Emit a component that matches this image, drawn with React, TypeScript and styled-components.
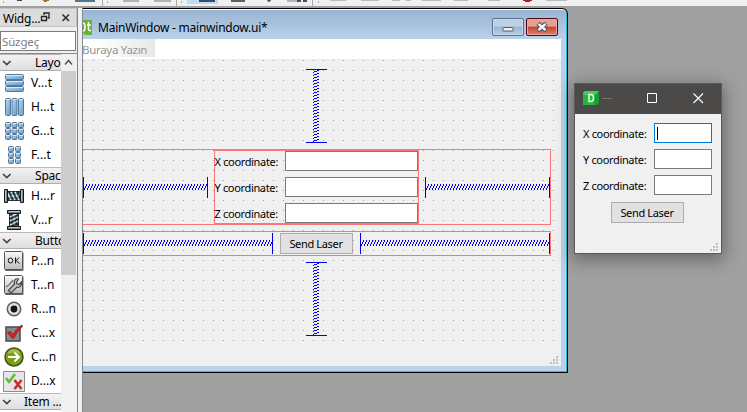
import React from "react";
import styled, { createGlobalStyle } from "styled-components";

const GlobalStyle = createGlobalStyle`
  * { box-sizing: border-box; }
  body { margin: 0; overflow: hidden; }
`;

const Screen = styled.div`
  width: 747px;
  height: 412px;
  overflow: hidden;
  display: flex;
  flex-direction: column;
  background: #f0f0f0;
  font-family: "Noto Sans", "Open Sans", sans-serif;
  font-size: 11.5px;
  color: #000;
`;

const Toolbar = styled.div`
  height: 8px;
  flex: none;
  background: #f0f0f0;
  border-bottom: 2px solid #a0a0a4;
  svg { display: block; }
`;

const Body = styled.div`
  flex: 1;
  min-height: 0;
  display: flex;
`;

const Dock = styled.div`
  width: 78px;
  flex: none;
  display: flex;
  flex-direction: column;
  border-right: 1px solid #82858c;
  background: #f0f0f0;
  overflow: hidden;
`;

const Splitter = styled.div`
  width: 5px;
  flex: none;
  background: #f0f0f0;
  border-right: 1px solid #828790;
`;

const DockTitle = styled.div`
  height: 19px;
  flex: none;
  background: #dcdcdc;
  border: 1px solid #c4c4c4;
  border-left: 0;
  display: flex;
  align-items: center;
  padding: 2px 0 0 3px;
  font-size: 12px;
  line-height: 17px;
  svg { flex: none; }
`;

const DockCaption = styled.span`
  width: 37px;
  letter-spacing: -0.2px;
  white-space: nowrap;
`;

const FilterBox = styled.div`
  margin: 4px 1px 2px 0;
  height: 20px;
  flex: none;
  border: 1px solid #7a7a7a;
  background: #fff;
  color: #808080;
  padding-left: 1px;
  line-height: 20px;
  letter-spacing: -0.15px;
`;

const Tree = styled.div`
  flex: 1;
  min-height: 0;
  display: flex;
  border-top: 1px solid #828790;
  background: #fff;
`;

const TreeList = styled.div`
  width: 61px;
  overflow: hidden;
`;

const ScrollTrack = styled.div`
  width: 16px;
  background: #f0f0f0;
  svg { display: block; }
`;

const ScrollThumb = styled.div`
  height: 204px;
  width: 15px;
  background: #cdcdcd;
`;

const Category = styled.div<{ $indent: number }>`
  height: 17px;
  display: flex;
  align-items: center;
  white-space: nowrap;
  background: linear-gradient(#f2f2f2, #dedede);
  border-top: 1px solid #b8b8b8;
  border-bottom: 1px solid #b0b0b0;
  padding-left: 2px;
  line-height: 15px;
  font-size: 12px;
  letter-spacing: -0.2px;
  svg { flex: none; margin-right: ${(p) => p.$indent}px; }
`;

const WidgetRow = styled.div`
  height: 24px;
  display: flex;
  align-items: center;
  padding-left: 3px;
  gap: 6px;
  line-height: 16px;
  white-space: nowrap;
  font-size: 12px;
  letter-spacing: 0.1px;
  svg { flex: none; }
`;

const Workspace = styled.div`
  flex: 1;
  position: relative;
  overflow: hidden;
  background: #a0a0a0;
`;

const FormWindow = styled.div`
  position: absolute;
  left: 0;
  top: 0;
  width: 485px;
  height: 365px;
  display: flex;
  flex-direction: column;
  padding: 1px 6px 6px 0;
  background: linear-gradient(#98b3d2, #b9d1ea 30px);
  border: solid #000;
  border-width: 1px 1px 1px 0;
  border-top-right-radius: 6px;
  box-shadow: inset -1px -1px 0 #27bfdc, inset 0 1px 0 #fff;
`;

const FormTitle = styled.div`
  height: 29px;
  flex: none;
  display: flex;
  align-items: center;
  > svg { flex: none; }
`;

const FormCaption = styled.span`
  flex: 1;
  font-size: 12px;
  padding: 7px 0 0 6px;
  line-height: 16px;
  letter-spacing: -0.24px;
`;

const CaptionButton = styled.div<{ $close?: boolean }>`
  width: 32px;
  height: 18px;
  margin: 4px 3px 0 ${(p) => (p.$close ? -1 : 0)}px;
  display: flex;
  align-items: center;
  justify-content: center;
  border: 1px solid ${(p) => (p.$close ? "#4d0c14" : "#5b7192")};
  border-radius: 2px;
  box-shadow: inset 0 0 0 1px ${(p) => (p.$close ? "#eaa79e" : "#c8daec")};
  background: ${(p) =>
    p.$close
      ? "linear-gradient(#e6a093 0 45%, #c2452f 50%, #d98470)"
      : "linear-gradient(#bcd0e6 0 45%, #9bb4d0 50%, #b5cce4)"};
`;

const MenuBar = styled.div`
  height: 20px;
  flex: none;
  display: flex;
  background: #fff;
`;

const MenuHint = styled.div`
  width: 72px;
  height: 18px;
  background: linear-gradient(90deg, #fff 20%, #e8e8e8);
  color: #969696;
  line-height: 21px;
  white-space: nowrap;
  text-indent: -1px;
  letter-spacing: -0.3px;
`;

const FormCanvas = styled.div`
  flex: 1;
  display: flex;
  flex-direction: column;
  background: #f0f0f0;
`;

const DotGrid = styled.div`
  flex: 1;
  display: flex;
  flex-direction: column;
  padding-top: 10px;
  background: conic-gradient(from 0deg at 1px 1px, transparent 75%, #9c9c9c 0) 0 1px / 10px 10px;
`;

const VerticalSlot = styled.div`
  height: 74px;
  padding-left: 223px;
  svg { display: block; }
`;

const FieldsLayout = styled.div`
  width: 468px;
  height: 76px;
  margin: 6px 0;
  display: flex;
  align-items: center;
  justify-content: space-between;
  border: 1px solid #f87878;
  border-left: 0;
  > svg { flex: none; }
`;

const FormLayout = styled.div`
  width: 205px;
  height: 74px;
  margin-left: -1px;
  border: 1px solid #f87878;
  display: flex;
  flex-direction: column;
  gap: 6px;
`;

const ButtonLayout = styled.div`
  width: 468px;
  height: 25px;
  margin-bottom: 6px;
  display: flex;
  align-items: center;
  justify-content: space-between;
  border: 1px solid #f87878;
  border-left: 0;
  > svg { flex: none; }
`;

const FieldRow = styled.div`
  height: 20px;
  flex: none;
  display: flex;
  align-items: center;
`;

const FieldLabel = styled.span<{ $width: number }>`
  width: ${(p) => p.$width}px;
  flex: none;
  font-size: 11px;
  line-height: 18px;
  padding-top: 2px;
  letter-spacing: -0.34px;
  white-space: nowrap;
`;

const LineEdit = styled.div<{ $focused?: boolean }>`
  flex: 1;
  height: 20px;
  padding: 3px 2px;
  background: #fff;
  border: 1px solid ${(p) => (p.$focused ? "#0078d7" : "#7a7a7a")};
`;

const Caret = styled.div`
  width: 1px;
  height: 13px;
  background: #000;
`;

const PushButton = styled.div`
  width: 73px;
  height: 21px;
  flex: none;
  border: 1px solid #adadad;
  background: #e1e1e1;
  padding-right: 1px;
  text-align: center;
  font-size: 11px;
  line-height: 20px;
  letter-spacing: -0.34px;
`;

const GripRow = styled.div<{ $fill?: boolean }>`
  height: ${(p) => (p.$fill ? "auto" : "24px")};
  flex: ${(p) => (p.$fill ? 1 : "none")};
  display: flex;
  justify-content: flex-end;
  align-items: flex-end;
  padding: 0 3px 2px 0;
`;

const AppWindow = styled.div`
  position: absolute;
  left: 491px;
  top: 75px;
  width: 148px;
  height: 171px;
  display: flex;
  flex-direction: column;
  border: 1px solid #5a5a5a;
  background: #f0f0f0;
  box-shadow: 0 4px 16px 2px rgba(0, 0, 0, 0.36);
`;

const AppTitle = styled.div`
  height: 30px;
  flex: none;
  background: #4c4a48;
  svg { display: block; }
`;

const AppContent = styled.div`
  flex: 1;
  display: flex;
  flex-direction: column;
  gap: 6px;
  padding: 9px 0 0 8px;
`;

const AppRows = styled.div`
  width: 129px;
  display: flex;
  flex-direction: column;
  gap: 6px;
`;

const AppAction = styled.div`
  padding-left: 28px;
  margin-top: 1px;
`;

const BLUE = "#0000e6";

const HSpring = ({ id, width }: { id: string; width: number }) => (
  <svg width={width} height="21" shapeRendering="crispEdges">
    <defs>
      <pattern id={id} x="0" y="7" width="3" height="6" patternUnits="userSpaceOnUse">
        <path d="M1 4h1v2h-1zM2 2h1v2h-1zM0 0h1v2h-1z" fill={BLUE} />
      </pattern>
    </defs>
    <rect x="1" y="7" width={width - 2} height="6" fill={`url(#${id})`} />
    <path d={`M0 0h1v21h-1zM${width - 1} 0h1v21h-1z`} fill={BLUE} />
  </svg>
);

const VSpring = ({ id }: { id: string }) => (
  <svg width="21" height="74" shapeRendering="crispEdges">
    <defs>
      <pattern id={id} x="7" y="0" width="6" height="3" patternUnits="userSpaceOnUse">
        <path d="M4 1h2v1h-2zM1 2h3v1h-3zM0 0h1v1h-1z" fill={BLUE} />
      </pattern>
    </defs>
    <rect x="7" y="1" width="6" height="72" fill={`url(#${id})`} />
    <path d="M0 0h21v1h-21zM0 73h21v1h-21z" fill={BLUE} />
  </svg>
);

const Chevron = () => (
  <svg width="10" height="10" viewBox="0 0 10 10">
    <path d="M1 3l3.8 3.6L8.6 3" fill="none" stroke="#444" strokeWidth="1.7" />
  </svg>
);

const Grip = () => (
  <svg width="8" height="8" shapeRendering="crispEdges">
    <path d="M6 0h2v2h-2zM3 3h2v2h-2zM6 3h2v2h-2zM0 6h2v2h-2zM3 6h2v2h-2zM6 6h2v2h-2z" fill="#bfbfbf" />
  </svg>
);

const Block = ({ x, y, w, h }: { x: number; y: number; w: number; h: number }) => (
  <>
    <rect x={x + 0.5} y={y + 0.5} width={w - 1} height={h - 1} rx="1" fill="url(#blockFill)" stroke="#5b7590" />
    <path d={`M${x + 1} ${y + 1.5}h${w - 2}`} stroke="#d5ebfa" />
  </>
);

const RowIcon = ({ children }: { children: React.ReactNode }) => (
  <svg width="22" height="24" viewBox="0 0 22 24">{children}</svg>
);

const VLayoutIcon = () => (
  <RowIcon>
    <defs>
      <linearGradient id="blockFill" x1="0" y1="0" x2="1" y2="1">
        <stop offset="0" stopColor="#b9dcf6" />
        <stop offset="1" stopColor="#6199c8" />
      </linearGradient>
      <linearGradient id="plate" x1="0" y1="0" x2="0" y2="1">
        <stop offset="0" stopColor="#fafafa" />
        <stop offset="1" stopColor="#bcbcbc" />
      </linearGradient>
    </defs>
    {[3, 9, 15].map((y) => <Block key={y} x={2} y={y} w={19} h={6} />)}
  </RowIcon>
);

const HLayoutIcon = () => (
  <RowIcon>{[2, 8.5, 15].map((x) => <Block key={x} x={x} y={3} w={6} h={18} />)}</RowIcon>
);

const GridIcon = ({ columns }: { columns: number[] }) => (
  <RowIcon>
    {columns.flatMap((x) => [3, 9, 15].map((y) => <Block key={`${x}-${y}`} x={x} y={y} w={6} h={6} />))}
  </RowIcon>
);

const Coil = () => (
  <>
    <rect x="4" y="7" width="14" height="10" fill="#1b2326" />
    <path d="M4 8l4 8M8 8l4 8M12 8l4 8" stroke="#d7e9ee" strokeWidth="1.7" />
    <path d="M6 16l4-8M10 16l4-8M14 16l3-8" stroke="#536e78" strokeWidth="1.2" />
    <path d="M1.500 5.500h3v13h-3zM17.500 5.500h3v13h-3z" fill="#7b8485" stroke="#15191a" />
    <path d="M2.500 6v11M18.500 6v11" stroke="#bcc8c9" />
  </>
);

const HSpacerIcon = () => <RowIcon><Coil /></RowIcon>;
const VSpacerIcon = () => <RowIcon><g transform="rotate(90 11 12)"><Coil /></g></RowIcon>;

const Plate = () => (
  <>
    <rect x="2" y="3.500" width="18.500" height="18.500" rx="1" fill="#666" />
    <rect x="1.500" y="2.500" width="18" height="18" rx="1" fill="url(#plate)" stroke="#555" />
  </>
);

const PushIcon = () => (
  <RowIcon>
    <Plate />
    <ellipse cx="7.500" cy="11.500" rx="2.300" ry="2.500" fill="none" stroke="#111" />
    <path d="M12.500 8.500v6M16 8.500l-3 3 3.500 3" fill="none" stroke="#111" />
  </RowIcon>
);

const ToolIcon = () => (
  <RowIcon>
    <Plate />
    <path d="M5.500 17.500l6-6.500c-1-3.500 1-6 4-5l-2 3 .5 2 2 .5 2.500-2.500c.5 4-2 6-4.500 5l-6 6z" fill="#c3c7c9" stroke="#444" strokeWidth="1.200" />
    <path d="M3 14l4-3 3-4" fill="none" stroke="#777" strokeWidth="1.500" />
  </RowIcon>
);

const RadioIcon = () => (
  <RowIcon>
    <circle cx="11" cy="12" r="6.700" fill="#e0e0e0" stroke="#5e5e5e" strokeWidth="1.500" />
    <circle cx="11" cy="12" r="3.400" fill="#151515" />
  </RowIcon>
);

const CheckIcon = () => (
  <RowIcon>
    <rect x="3" y="6" width="14" height="14" fill="#898989" stroke="#494949" strokeWidth="1.500" />
    <path d="M4.500 11.500l3-1 2.500 3.500c2-4 5-7.500 9-10l.5 1.500c-4 3-6.500 7-8.500 11.500h-2z" fill="#db2525" stroke="#8f1010" strokeWidth=".8" />
  </RowIcon>
);

const CommandIcon = () => (
  <RowIcon>
    <circle cx="11" cy="12" r="9" fill="#7e9e18" stroke="#42550f" strokeWidth="1.500" />
    <path d="M4 9a7.500 7.500 0 0 1 14 0q-7-3-14 0" fill="#a7bd49" />
    <path d="M5 12h11M11.500 7.500l4.500 4.500-4.500 4.500" fill="none" stroke="#fff" strokeWidth="2" />
  </RowIcon>
);

const DialogIcon = () => (
  <RowIcon>
    <path d="M.5 2.500h21v20h-21z" fill="#e6e6e6" stroke="#8b8b8b" />
    <path d="M3 9l3 4 6-8" fill="none" stroke="#67b83c" strokeWidth="2.500" />
    <path d="M11.500 11l7 9M18.500 11l-7 9" stroke="#c72e2e" strokeWidth="2.600" />
  </RowIcon>
);

const labels = ["X coordinate:", "Y coordinate:", "Z coordinate:"];

export default function App() {
  return (
    <>
      <GlobalStyle />
      <Screen>
        <Toolbar>
          <svg width="747" height="6" shapeRendering="crispEdges">
            <path d="M102 0h1v6h-1zM176 0h1v6h-1zM312 0h1v6h-1z" fill="#aaa" />
            <path d="M3 1h1v2h-1zM107 1h1v2h-1zM181 1h1v2h-1zM318 1h1v2h-1z" fill="#aaa" />
            <path d="M17 0h5v1h-5z" fill="#594b40" />
            <path d="M43 0h6v1h-2v1h-3z" fill="#a67524" />
            <path d="M75 0h20v2h-20z" fill="#53768f" />
            <path d="M123 0h16v2h-16zM154 0h17v2h-17z" fill="#b2b2b2" />
            <path d="M187 0h31v4h-31z" fill="#bcdcf4" />
            <path d="M199 0h16v2h-16z" fill="#364d68" />
            <path d="M231 0h14v2h-14z" fill="#58616b" />
            <path d="M267 0h4v1h-1v1h-2v-1h-1z" fill="#666" />
            <path d="M287 0h11v2h-11z" fill="#b5b5b5" />
            <path d="M297 0h4v2h-4zM303 0h4v2h-4z" fill="#3e4d70" />
            <path d="M330 0h16v1h-16zM361 0h18v1h-18zM392 0h8v1h-8zM406 0h5v1h-5zM422 0h19v1h-19zM454 0h14v1h-14zM488 0h12v1h-12zM546 0h21v1h-21z" fill="#bbb" />
            <path d="M523 0h9v1h-2v1h-5v-1h-2z" fill="#b91820" />
          </svg>
        </Toolbar>
        <Body>
          <Dock>
            <DockTitle>
              <DockCaption>Widg...</DockCaption>
              <svg width="35" height="15" viewBox="0 0 35 15">
                <path d="M4 4V2h5v5H7.500M1.500 5.500h5v4h-5z" fill="none" stroke="#222" strokeWidth="1.300" />
                <path d="M22.500 3.500l6.500 6.500M29 3.500l-6.500 6.500" stroke="#333" strokeWidth="1.700" />
              </svg>
            </DockTitle>
            <FilterBox>Süzgeç</FilterBox>
            <Tree>
              <TreeList>
                <Category $indent={23}><Chevron />Layo</Category>
                <WidgetRow><VLayoutIcon />V...t</WidgetRow>
                <WidgetRow><HLayoutIcon />H...t</WidgetRow>
                <WidgetRow><GridIcon columns={[2, 8.5, 15]} />G...t</WidgetRow>
                <WidgetRow><GridIcon columns={[5, 12]} />F...t</WidgetRow>
                <Category $indent={23}><Chevron />Spac</Category>
                <WidgetRow><HSpacerIcon />H...r</WidgetRow>
                <WidgetRow><VSpacerIcon />V...r</WidgetRow>
                <Category $indent={23}><Chevron />Butto</Category>
                <WidgetRow><PushIcon />P...n</WidgetRow>
                <WidgetRow><ToolIcon />T...n</WidgetRow>
                <WidgetRow><RadioIcon />R...n</WidgetRow>
                <WidgetRow><CheckIcon />C...x</WidgetRow>
                <WidgetRow><CommandIcon />C...n</WidgetRow>
                <WidgetRow><DialogIcon />D...x</WidgetRow>
                <Category $indent={12}><Chevron />Item ...</Category>
              </TreeList>
              <ScrollTrack>
                <svg width="16" height="17"><path d="M4 10.500l3.500-4 3.500 4" fill="none" stroke="#555" strokeWidth="1.600" /></svg>
                <ScrollThumb />
              </ScrollTrack>
            </Tree>
          </Dock>
          <Splitter />
          <Workspace>
            <FormWindow>
              <FormTitle>
                <svg width="9" height="29" viewBox="0 0 9 29">
                  <path d="M0 10h9v15h-7l-2-2z" fill="#67b52f" />
                  <path d="M0 13q2 0 2 4t-2 4M4 15h4M5.500 12v7q0 2 2.500 1.500" fill="none" stroke="#fff" strokeWidth="1.500" />
                </svg>
                <FormCaption>MainWindow - mainwindow.ui*</FormCaption>
                <CaptionButton>
                  <svg width="12" height="16"><rect x="1" y="8.500" width="10" height="3.500" rx=".5" fill="#f2f2f2" stroke="#535c6e" /></svg>
                </CaptionButton>
                <CaptionButton $close>
                  <svg width="12" height="12" viewBox="0 0 12 12">
                    <path d="M2 2.500l8 7M10 2.500l-8 7" stroke="#4b4d62" strokeWidth="4.500" />
                    <path d="M2.500 3l7 6M9.500 3l-7 6" stroke="#f8f8f8" strokeWidth="2.400" />
                  </svg>
                </CaptionButton>
              </FormTitle>
              <MenuBar><MenuHint>Buraya Yazın</MenuHint></MenuBar>
              <FormCanvas>
                <DotGrid>
                  <VerticalSlot><VSpring id="springTop" /></VerticalSlot>
                  <FieldsLayout>
                    <HSpring id="springFieldsLeft" width={125} />
                    <FormLayout>
                      {labels.map((label) => (
                        <FieldRow key={label}>
                          <FieldLabel $width={70}>{label}</FieldLabel>
                          <LineEdit />
                        </FieldRow>
                      ))}
                    </FormLayout>
                    <HSpring id="springFieldsRight" width={125} />
                  </FieldsLayout>
                  <ButtonLayout>
                    <HSpring id="springButtonLeft" width={190} />
                    <PushButton>Send Laser</PushButton>
                    <HSpring id="springButtonRight" width={190} />
                  </ButtonLayout>
                  <VerticalSlot><VSpring id="springBottom" /></VerticalSlot>
                </DotGrid>
                <GripRow><Grip /></GripRow>
              </FormCanvas>
            </FormWindow>
            <AppWindow>
              <AppTitle>
                <svg width="146" height="30">
                  <path d="M10 7h14v11l-2 3H8V9z" fill="#28b443" />
                  <path d="M10 7h14l-4 4H8V9z" fill="#48ce58" />
                  <path d="M20 11l4-4v11l-2 3h-3z" fill="#1a9f38" />
                  <path d="M14 10.500v7h1.500q3 0 3-3.500t-3-3.500z" fill="none" stroke="#e8ffe6" strokeWidth="1.500" />
                  <path d="M27 14.500h10" stroke="#777572" />
                  <path d="M72.500 9.500h9v9h-9z" fill="none" stroke="#fff" />
                  <path d="M118.500 9.500l9.500 9.500M128 9.500l-9.500 9.500" stroke="#fff" strokeWidth="1.100" />
                </svg>
              </AppTitle>
              <AppContent>
                <AppRows>
                  {labels.map((label, i) => (
                    <FieldRow key={label}>
                      <FieldLabel $width={71}>{label}</FieldLabel>
                      <LineEdit $focused={i === 0}>{i === 0 && <Caret />}</LineEdit>
                    </FieldRow>
                  ))}
                </AppRows>
                <AppAction><PushButton>Send Laser</PushButton></AppAction>
                <GripRow $fill><Grip /></GripRow>
              </AppContent>
            </AppWindow>
          </Workspace>
        </Body>
      </Screen>
    </>
  );
}
